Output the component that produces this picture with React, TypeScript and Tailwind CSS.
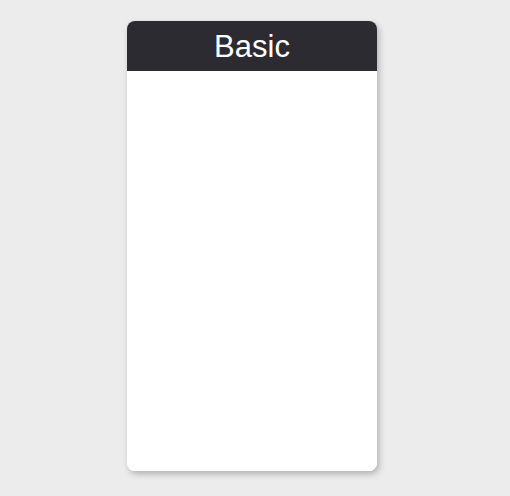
export default function App() {
  return (
    <div className="w-[510px] h-[496px] bg-[#ececec] flex justify-center pt-[21px] pr-[6px]" style={{ fontFamily: '"Liberation Sans", Arial, sans-serif' }}>
      <div className="w-[250px] h-[450px] bg-white rounded-[8px] overflow-hidden shadow-[2px_3px_6px_rgba(0,0,0,0.25)] flex flex-col">
        <div className="h-[50px] bg-[#2b2b31] flex items-center justify-center text-white text-[31px] leading-none">
          Basic
        </div>
        <div className="flex-1 bg-white" />
      </div>
    </div>
  );
}
